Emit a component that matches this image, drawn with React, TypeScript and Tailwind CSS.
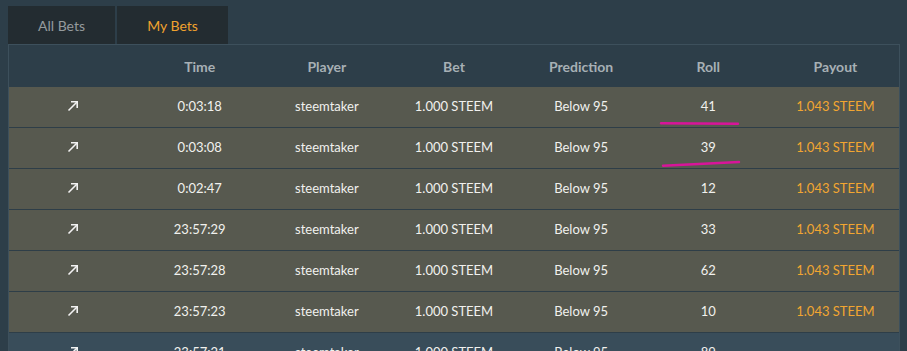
import React from "react";

const rows = [
  { time: "0:03:18", roll: "41", payout: "1.043 STEEM" },
  { time: "0:03:08", roll: "39", payout: "1.043 STEEM" },
  { time: "0:02:47", roll: "12", payout: "1.043 STEEM" },
  { time: "23:57:29", roll: "33", payout: "1.043 STEEM" },
  { time: "23:57:28", roll: "62", payout: "1.043 STEEM" },
  { time: "23:57:23", roll: "10", payout: "1.043 STEEM" },
];

function Arrow() {
  return (
    <svg width="12" height="12" viewBox="0 0 12 12" className="block">
      <path d="M1.5 10.5 L10 2" stroke="#f2f2f2" strokeWidth="1.6" fill="none" />
      <path d="M4 1.8 H10.2 V8" stroke="#f2f2f2" strokeWidth="1.6" fill="none" />
    </svg>
  );
}

function Row({ time, roll, payout, alt }: { time: string; roll: string; payout: string; alt?: boolean }) {
  return (
    <div
      className={
        "grid grid-cols-7 h-[41px] items-center text-center text-[13px] text-[#f1f1ee] border-b border-[#2e3e48] " +
        (alt ? "bg-[#394d5a]" : "bg-[#57594f]")
      }
    >
      <div className="flex justify-center -mt-[3px]">
        <Arrow />
      </div>
      <div>{time}</div>
      <div>steemtaker</div>
      <div>1.000 STEEM</div>
      <div>Below 95</div>
      <div>{roll}</div>
      <div className="text-[#f2a631]">{payout}</div>
    </div>
  );
}

export default function App() {
  return (
    <div
      className="w-[907px] h-[351px] overflow-hidden bg-[#2d3e49] relative"
      style={{ fontFamily: "Lato, 'Open Sans', sans-serif" }}
    >
      <div className="pl-2 pt-[6px] flex gap-[2px]">
        <div className="w-[107px] h-[38px] bg-[#232c31] flex items-center justify-center text-[14px] text-[#959b9e]">
          All Bets
        </div>
        <div className="w-[111px] h-[38px] bg-[#232c31] flex items-center justify-center text-[14px] text-[#f0a22e]">
          My Bets
        </div>
      </div>
      <div className="ml-2 w-[892px] border-l border-t border-r border-[#3d505c]">
        <div className="grid grid-cols-7 h-[42px] items-center text-center text-[14px] font-bold text-[#a7b0b5]">
          <div></div>
          <div>Time</div>
          <div>Player</div>
          <div>Bet</div>
          <div>Prediction</div>
          <div>Roll</div>
          <div>Payout</div>
        </div>
        {rows.map((r, i) => (
          <Row key={i} {...r} />
        ))}
        <Row time="23:57:21" roll="89" payout="" alt />
      </div>
      <svg className="absolute left-0 top-0 pointer-events-none" width="907" height="351">
        <path d="M661 123.3 L738 123.8" stroke="#d8149a" strokeWidth="2.4" strokeLinecap="round" fill="none" />
        <path d="M663 165.8 Q700 164 739 162" stroke="#d8149a" strokeWidth="2.4" strokeLinecap="round" fill="none" />
      </svg>
    </div>
  );
}
